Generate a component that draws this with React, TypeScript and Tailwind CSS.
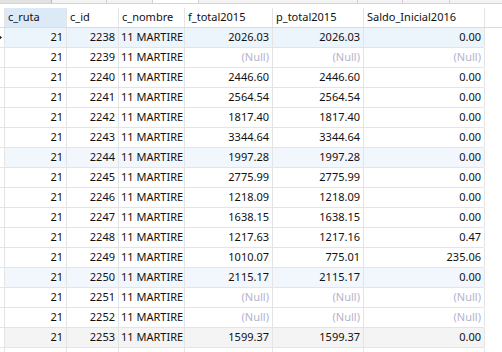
import React from 'react';

type Row = {
  id: number;
  f: string | null;
  p: string | null;
  s: string | null;
  bg?: string;
};

const rows: Row[] = [
  { id: 2238, f: '2026.03', p: '2026.03', s: '0.00', bg: 'bg-[#ecf4fc]' },
  { id: 2239, f: null, p: null, s: null },
  { id: 2240, f: '2446.60', p: '2446.60', s: '0.00' },
  { id: 2241, f: '2564.54', p: '2564.54', s: '0.00' },
  { id: 2242, f: '1817.40', p: '1817.40', s: '0.00' },
  { id: 2243, f: '3344.64', p: '3344.64', s: '0.00' },
  { id: 2244, f: '1997.28', p: '1997.28', s: '0.00', bg: 'bg-[#f1f7fd]' },
  { id: 2245, f: '2775.99', p: '2775.99', s: '0.00' },
  { id: 2246, f: '1218.09', p: '1218.09', s: '0.00' },
  { id: 2247, f: '1638.15', p: '1638.15', s: '0.00' },
  { id: 2248, f: '1217.63', p: '1217.16', s: '0.47' },
  { id: 2249, f: '1010.07', p: '775.01', s: '235.06' },
  { id: 2250, f: '2115.17', p: '2115.17', s: '0.00', bg: 'bg-[#f1f7fd]' },
  { id: 2251, f: null, p: null, s: null },
  { id: 2252, f: null, p: null, s: null },
  { id: 2253, f: '1599.37', p: '1599.37', s: '0.00', bg: 'bg-[#f4f4f4]' },
];

const cell = 'h-full shrink-0 overflow-hidden whitespace-nowrap border-r border-[#e4e4e4] flex items-center';

function Num({ v, w }: { v: string | null; w: string }) {
  return (
    <div className={`${cell} ${w} justify-end pr-[3px]`}>
      {v === null ? <span className="text-[#b3b3cc]">(Null)</span> : v}
    </div>
  );
}

function Header({ label, w, active }: { label: string; w: string; active?: boolean }) {
  return (
    <div className={`${cell} ${w} pl-[3px] ${active ? 'bg-[#dce9f7]' : 'bg-white'}`}>{label}</div>
  );
}

export default function App() {
  return (
    <div
      className="h-[352px] w-[502px] overflow-hidden bg-white text-[11px] text-[#111]"
      style={{ fontFamily: '"Noto Sans", "Liberation Sans", sans-serif' }}
    >
      {/* tab strip remnant */}
      <div className="flex h-[4px] border-b border-[#d4d4d4] bg-[#f3f3f3]">
        <div className="w-[52px] border-r border-[#b8b8b8] bg-[#e2e2e2]" />
        <div className="w-[55px] border-r border-[#d0d0d0]" />
        <div className="w-[46px] border-r border-[#d0d0d0]" />
        <div className="w-[46px] border-r border-[#d0d0d0] bg-white" />
        <div className="w-[159px] border-r border-[#d0d0d0]" />
        <div className="w-[45px] border-r border-[#d0d0d0]" />
        <div className="w-[47px] border-r border-[#d0d0d0]" />
      </div>

      <div className="h-[4px]" />

      {/* header */}
      <div className="flex h-[20px] border-b border-[#dcdcdc]">
        <div className={`${cell} w-[5px]`} />
        <Header label="c_ruta" w="w-[62px]" active />
        <Header label="c_id" w="w-[52px]" />
        <Header label="c_nombre" w="w-[66px]" />
        <Header label="f_total2015" w="w-[88px]" />
        <Header label="p_total2015" w="w-[91px]" />
        <Header label="Saldo_Inicial2016" w="w-[121px]" />
      </div>

      {rows.map((r) => (
        <div key={r.id} className={`flex h-[20px] w-[484px] border-b border-[#e4e4e4] ${r.bg ?? ''}`}>
          <div className={`${cell} w-[5px] bg-white`}>
            {r.id === 2238 && (
              <svg width="3" height="5" viewBox="0 0 3 5" className="-ml-[1px]">
                <path d="M0 0 L3 2.5 L0 5 Z" fill="#222" />
              </svg>
            )}
          </div>
          <Num v="21" w="w-[62px]" />
          <Num v={String(r.id)} w="w-[52px]" />
          <div className={`${cell} w-[66px] pl-[2px]`}>11 MARTIRE</div>
          <Num v={r.f} w="w-[88px]" />
          <Num v={r.p} w="w-[91px]" />
          <Num v={r.s} w="w-[121px]" />
        </div>
      ))}

      <div className="flex h-[20px] w-[484px]">
        <div className={`${cell} w-[5px]`} />
        <div className={`${cell} w-[62px]`} />
        <div className={`${cell} w-[52px]`} />
        <div className={`${cell} w-[66px]`} />
        <div className={`${cell} w-[88px]`} />
        <div className={`${cell} w-[91px]`} />
        <div className={`${cell} w-[121px]`} />
      </div>
    </div>
  );
}
